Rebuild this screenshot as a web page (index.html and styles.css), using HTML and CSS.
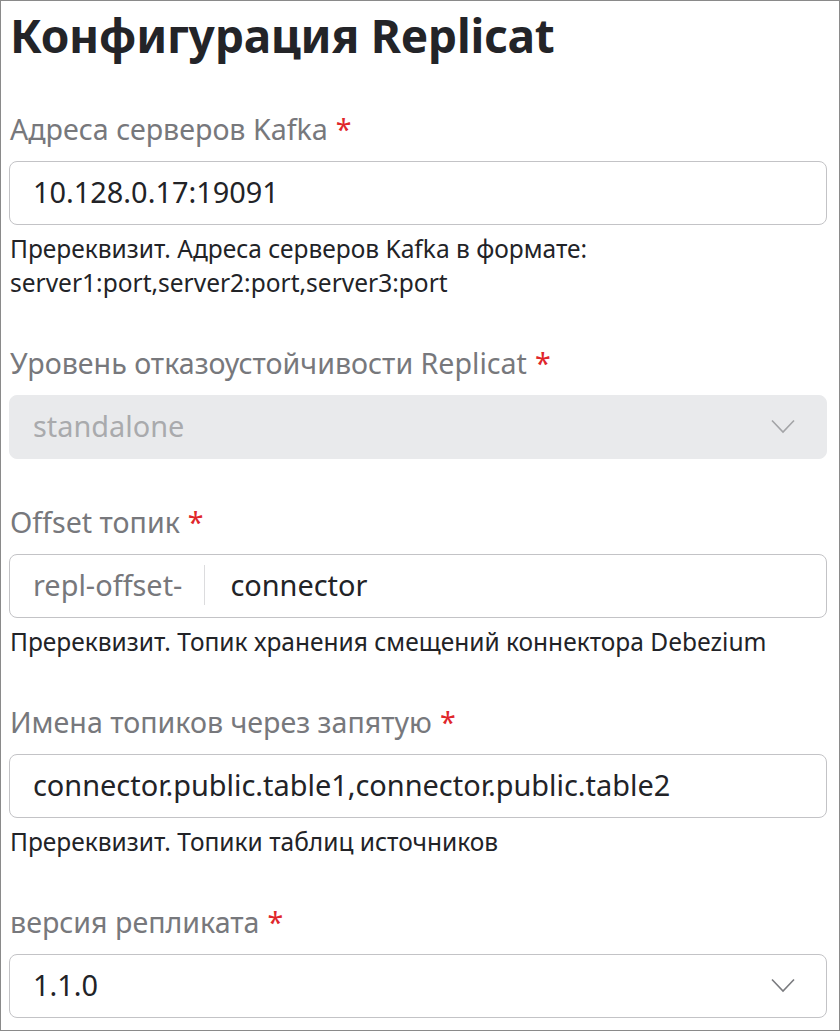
FILE: index.html
```html
<!DOCTYPE html>
<html lang="ru">
<head>
<meta charset="utf-8">
<title>Конфигурация Replicat</title>
<link rel="stylesheet" href="styles.css">
</head>
<body>
<div class="frame">
  <h1 class="title">Конфигурация Replicat</h1>

  <div class="field">
    <label class="label">Адреса серверов Kafka<span class="req">*</span></label>
    <div class="control"><span class="value">10.128.0.17:19091</span></div>
    <p class="help">Пререквизит. Адреса серверов Kafka в формате:<br>server1:port,server2:port,server3:port</p>
  </div>

  <div class="field">
    <label class="label">Уровень отказоустойчивости Replicat<span class="req">*</span></label>
    <div class="control select disabled">
      <span class="value">standalone</span>
      <svg class="chevron" width="24" height="16" viewBox="0 0 24 16"><path d="M1 1.5 L12 13 L23 1.5" fill="none" stroke="currentColor" stroke-width="1.6"/></svg>
    </div>
  </div>

  <div class="field">
    <label class="label">Offset топик<span class="req">*</span></label>
    <div class="control prefixed">
      <span class="prefix">repl-offset-</span>
      <span class="value">connector</span>
    </div>
    <p class="help">Пререквизит. Топик хранения смещений коннектора Debezium</p>
  </div>

  <div class="field">
    <label class="label">Имена топиков через запятую<span class="req">*</span></label>
    <div class="control"><span class="value">connector.public.table1,connector.public.table2</span></div>
    <p class="help">Пререквизит. Топики таблиц источников</p>
  </div>

  <div class="field">
    <label class="label">версия репликата<span class="req">*</span></label>
    <div class="control select">
      <span class="value">1.1.0</span>
      <svg class="chevron" width="24" height="16" viewBox="0 0 24 16"><path d="M1 1.5 L12 13 L23 1.5" fill="none" stroke="currentColor" stroke-width="1.6"/></svg>
    </div>
  </div>
</div>
</body>
</html>
```
FILE: styles.css
```css
html, body {
  margin: 0;
  padding: 0;
  background: #ffffff;
}

body {
  font-family: "Noto Sans", "Open Sans", sans-serif;
  color: #222327;
}

.frame {
  box-sizing: border-box;
  width: 840px;
  height: 1031px;
  border: 1px solid #8a8a8a;
  padding: 0 12px 0 8px;
  overflow: hidden;
}

.title {
  margin: 0;
  padding: 4px 0 0 1px;
  font-size: 46px;
  line-height: 60px;
  font-weight: 700;
  letter-spacing: -0.2px;
  color: #232428;
}

.field {
  display: flex;
  flex-direction: column;
  margin-top: 47px;
}

.title + .field {
  margin-top: 48px;
}

.label {
  font-size: 28.6px;
  line-height: 32px;
  color: #77787c;
  padding-left: 1px;
  margin-bottom: 16px;
}

.req {
  color: #e0262b;
  margin-left: 8px;
}

.control {
  box-sizing: border-box;
  height: 64px;
  border: 1px solid #c3c3c6;
  border-radius: 8px;
  display: flex;
  align-items: center;
  padding: 0 31px 3px 23px;
  font-size: 28.9px;
  color: #222327;
}

.control .value {
  flex: 1;
}

.select .chevron {
  margin-top: 3px;
}

.select.disabled {
  background: #e9eaec;
  border-color: #e9eaec;
  color: #a9aaad;
}

.chevron {
  color: #7a7b7f;
  flex: none;
}

.select.disabled .chevron {
  color: #a3a4a7;
}

.prefixed .prefix {
  color: #77787c;
  padding-right: 22px;
  border-right: 1px solid #dcdcde;
  line-height: 40px;
  margin-right: 25px;
}

.help {
  margin: 7px 0 0;
  padding-left: 1px;
  font-size: 24.5px;
  line-height: 34px;
  color: #222327;
}
```
